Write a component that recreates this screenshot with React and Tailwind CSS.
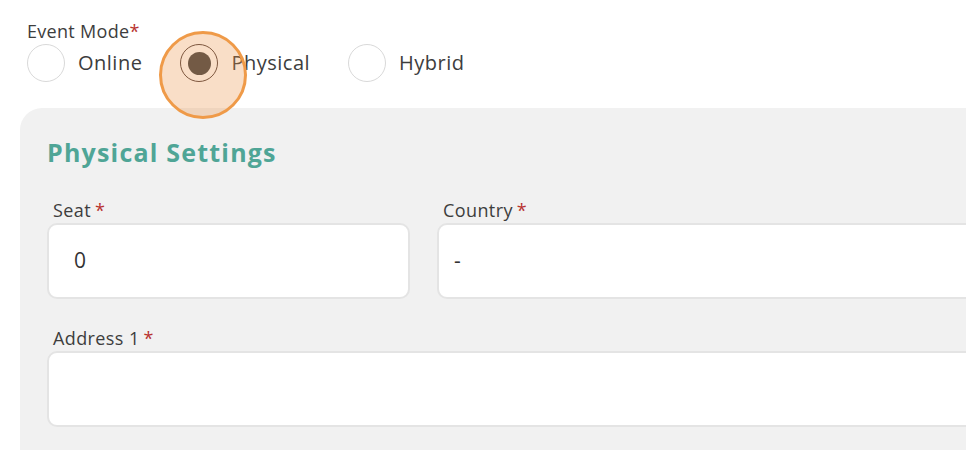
import React from "react"

const Req = ({ tight }) => (
  <span className={`text-[#b8322f] ${tight ? "" : "ml-1"}`}>*</span>
)

const Radio = ({ label, checked }) => (
  <label className="flex items-center gap-[13px]">
    <span
      className={`relative flex h-[38px] w-[38px] items-center justify-center rounded-full ${
        checked ? "border-[1.5px] border-[#4f3e3c]" : "border border-[#d9d9d9]"
      } bg-white`}
    >
      {checked && <span className="relative z-20 h-[23px] w-[23px] rounded-full bg-[#735a45]" />}
      {checked && (
        <span className="absolute left-[-22px] top-[-14px] z-10 h-[88px] w-[88px] rounded-full border-[3px] border-[#ef9a48] bg-[rgba(235,145,70,0.3)]" />
      )}
    </span>
    <span className="text-[20px] tracking-[0.5px] text-[#3d3d3d]">{label}</span>
  </label>
)

const Field = ({ label, value, className }) => (
  <div className={className}>
    <div className="mb-[1px] pl-[6px] text-[18px] leading-[24px] tracking-[0.4px] text-[#3d3d3d]">
      {label}
      <Req />
    </div>
    <div className="flex h-[76px] items-center rounded-[10px] border-2 border-[#e4e4e4] bg-white px-[15px] text-[21px] text-[#333]">
      {value}
    </div>
  </div>
)

export default function App() {
  return (
    <div
      className="h-[450px] w-[966px] overflow-hidden bg-white"
      style={{ fontFamily: '"Open Sans", "Noto Sans", sans-serif' }}
    >
      <div className="pl-[27px] pt-[19px]">
        <div className="text-[18px] leading-[24px] tracking-[0.3px] text-[#3d3d3d]">
          Event Mode
          <Req tight />
        </div>
        <div className="mt-[1px] flex items-center gap-[38px]">
          <Radio label="Online" />
          <Radio label="Physical" checked />
          <Radio label="Hybrid" />
        </div>
      </div>

      <div className="ml-[20px] mt-[26px] w-[1200px] rounded-tl-[22px] bg-[#f1f1f1] px-[27px] pb-[40px] pt-[28px]">
        <h2 className="text-[25px] font-bold leading-[32px] tracking-[1.2px] text-[#4fa596]">
          Physical Settings
        </h2>
        <div className="mt-[30px] flex gap-[27px]">
          <Field label="Seat" value={<span className="pl-[10px]">0</span>} className="w-[363px]" />
          <Field label="Country" value="-" className="flex-1" />
        </div>
        <Field label="Address 1" value="" className="mt-[27px]" />
      </div>
    </div>
  )
}
